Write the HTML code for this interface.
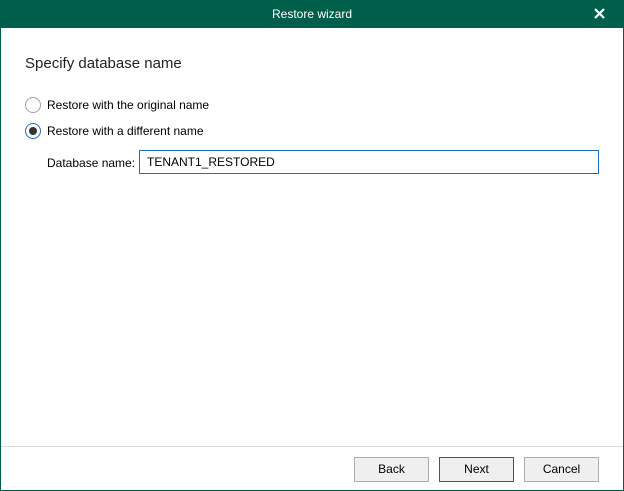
<!DOCTYPE html>
<html><head><style>
*{box-sizing:border-box;margin:0;padding:0}
body{width:624px;height:491px;background:#fff;font-family:"Liberation Sans",sans-serif;font-size:12px;color:#000;position:relative;overflow:hidden}
.frame{position:absolute;left:0;top:0;width:624px;height:491px;border:1px solid #005f4b;border-top:none}
.title{position:absolute;left:0;top:0;width:624px;height:28px;background:#005f4b;color:#fff;text-align:center;line-height:28px;font-size:12px}
.x{position:absolute;right:19px;top:8px;width:11px;height:11px}
h1{position:absolute;left:25px;top:55px;font-size:15px;font-weight:normal;color:#222}
.r{position:absolute;left:25px;width:16px;height:16px;border-radius:50%;border:1px solid #a0a0a0;background:#fff}
.r.on{border-color:#1a6cc4}
.r.on::after{content:"";position:absolute;left:3px;top:3px;width:8px;height:8px;border-radius:50%;background:#333}
.lbl{position:absolute;left:47px;font-size:12px}
.in{position:absolute;left:139px;top:150px;width:460px;height:24px;border:1px solid #1a6cc4;padding-left:7px;line-height:22px}
.sep{position:absolute;left:1px;right:1px;top:446px;height:1px;background:#d9d9d9}
.b{position:absolute;top:457px;width:75px;height:25px;background:#efefef;border:1px solid #adadad;text-align:center;line-height:23px}
.b.d{border-color:#1a5fa8}
</style></head><body>
<div class="frame"></div>
<div class="title">Restore wizard
<svg class="x" viewBox="0 0 11 11"><path d="M1 1L10 10M10 1L1 10" stroke="#fff" stroke-width="2.2"/></svg></div>
<h1>Specify database name</h1>
<div class="r" style="top:97px"></div><div class="lbl" style="top:98px">Restore with the original name</div>
<div class="r on" style="top:123px"></div><div class="lbl" style="top:124px">Restore with a different name</div>
<div class="lbl" style="top:156px">Database name:</div>
<div class="in">TENANT1_RESTORED</div>
<div class="sep"></div>
<div class="b" style="left:354px">Back</div>
<div class="b d" style="left:439px">Next</div>
<div class="b" style="left:524px">Cancel</div>
</body></html>
